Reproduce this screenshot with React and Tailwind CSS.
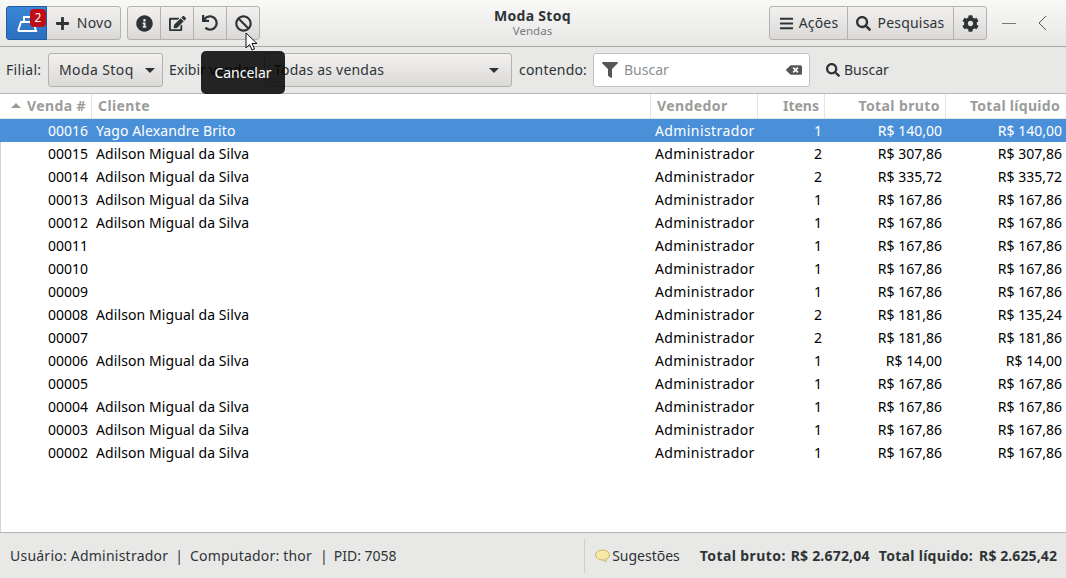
import React from 'react';
import { FaPlus, FaInfoCircle, FaEdit, FaUndo, FaBan, FaBars, FaSearch, FaCog, FaFilter, FaBackspace } from 'react-icons/fa';

const rows = [
  ['00016', 'Yago Alexandre Brito', '1', 'R$ 140,00', 'R$ 140,00'],
  ['00015', 'Adilson Migual da Silva', '2', 'R$ 307,86', 'R$ 307,86'],
  ['00014', 'Adilson Migual da Silva', '2', 'R$ 335,72', 'R$ 335,72'],
  ['00013', 'Adilson Migual da Silva', '1', 'R$ 167,86', 'R$ 167,86'],
  ['00012', 'Adilson Migual da Silva', '1', 'R$ 167,86', 'R$ 167,86'],
  ['00011', '', '1', 'R$ 167,86', 'R$ 167,86'],
  ['00010', '', '1', 'R$ 167,86', 'R$ 167,86'],
  ['00009', '', '1', 'R$ 167,86', 'R$ 167,86'],
  ['00008', 'Adilson Migual da Silva', '2', 'R$ 181,86', 'R$ 135,24'],
  ['00007', '', '2', 'R$ 181,86', 'R$ 181,86'],
  ['00006', 'Adilson Migual da Silva', '1', 'R$ 14,00', 'R$ 14,00'],
  ['00005', '', '1', 'R$ 167,86', 'R$ 167,86'],
  ['00004', 'Adilson Migual da Silva', '1', 'R$ 167,86', 'R$ 167,86'],
  ['00003', 'Adilson Migual da Silva', '1', 'R$ 167,86', 'R$ 167,86'],
  ['00002', 'Adilson Migual da Silva', '1', 'R$ 167,86', 'R$ 167,86'],
];
const cols = 'grid grid-cols-[92px_559px_107px_67px_121px_120px]';
const face = 'h-[34px] flex items-center bg-gradient-to-b from-[#f2f1f0] to-[#dbd9d7] border border-[#b4b2ae] text-[#2e3436]';
const btn = `${face} justify-center`;

export default function App() {
  return (
    <div className="relative w-[1066px] h-[578px] overflow-hidden bg-white text-[14px] text-[#2e3436] flex flex-col" style={{ fontFamily: '"Noto Sans", sans-serif' }}>
      <div className="h-[47px] shrink-0 flex items-center pl-[6px] border-b border-[#a8a6a2] bg-gradient-to-b from-[#f8f8f7] to-[#e8e7e6]">
        <div className="flex">
          <div className="relative w-[41px] h-[34px] rounded-l-[3px] border border-[#1c5da5] bg-gradient-to-b from-[#3d87d6] to-[#2a6fc0]">
            <svg width="22" height="20" viewBox="0 0 22 20" className="absolute left-[9px] top-[7px]" fill="none" stroke="#fff" strokeWidth="2">
              <path d="M2 17 L5 8 H14 M8 8 V3 H14 M2 17 H20 L18.5 12" />
            </svg>
            <span className="absolute right-[0px] top-[2px] w-[16px] h-[18px] rounded-[4px] bg-[#c00d17] text-white text-[12px] leading-[18px] text-center">2</span>
          </div>
          <div className={`${btn} w-[75px] -ml-px rounded-r-[3px] gap-[7px]`}><FaPlus size={15} /><span className="tracking-[0.3px] -mt-[2px]">Novo</span></div>
        </div>
        <div className="flex ml-[6px]">
          <div className={`${btn} w-[34px] rounded-l-[3px]`}><FaInfoCircle size={17} /></div>
          <div className={`${btn} w-[34px] -ml-px`}><FaEdit size={17} /></div>
          <div className={`${btn} w-[34px] -ml-px`}><FaUndo size={16} /></div>
          <div className={`${btn} w-[34px] -ml-px rounded-r-[3px]`}><FaBan size={17} /></div>
        </div>
        <div className="flex-1 flex flex-col items-center leading-[15px] pl-[36px]">
          <span className="font-bold text-[14px] tracking-[0.3px]">Moda Stoq</span>
          <span className="text-[11.5px] text-[#777a7b]">Vendas</span>
        </div>
        <div className="flex">
          <div className={`${btn} w-[79px] rounded-l-[3px] gap-[5px]`}><FaBars size={15} /><span className="tracking-[0.2px] -mt-[2px]">Ações</span></div>
          <div className={`${btn} w-[107px] -ml-px gap-[6px]`}><FaSearch size={15} /><span className="tracking-[0.2px] -mt-[2px]">Pesquisas</span></div>
          <div className={`${btn} w-[34px] -ml-px rounded-r-[3px]`}><FaCog size={17} /></div>
        </div>
        <div className="w-[79px] shrink-0 flex items-center text-[#5d5f5f]">
          <span className="ml-[15px] w-[14px] h-px bg-[#777]" />
          <svg width="10" height="16" viewBox="0 0 10 16" fill="none" stroke="#555" strokeWidth="1" className="ml-[21px]"><path d="M9 1 L2 8 L9 15" /></svg>
        </div>
      </div>

      <div className="h-[47px] shrink-0 flex items-center pl-[6px] bg-[#e8e8e7] border-b border-[#b6b4b0]">
        <span className="w-[36px] tracking-[0.3px] -mt-[2px]">Filial:</span>
        <div className={`${face} w-[115px] ml-[6px] rounded-[3px] pl-[10px] pr-[7px]`}>
          <span className="flex-1 tracking-[0.4px] -mt-[2px]">Moda Stoq</span><span className="w-0 h-0 border-x-[5px] border-x-transparent border-t-[5px] border-t-[#2e3436]" />
        </div>
        <span className="ml-[6px] w-[95px] -mt-[2px]">Exibir vendas</span>
        <div className={`${face} w-[248px] rounded-[3px] pl-[9px] pr-[12px]`}>
          <span className="flex-1 tracking-[0.2px] -mt-[2px]">Todas as vendas</span><span className="w-0 h-0 border-x-[5px] border-x-transparent border-t-[5px] border-t-[#2e3436]" />
        </div>
        <span className="ml-[7px] w-[68px] tracking-[0.2px] -mt-[2px]">contendo:</span>
        <div className="w-[217px] h-[34px] ml-[6px] rounded-[3px] border border-[#c4c2bf] bg-white flex items-center pl-[8px] pr-[7px] gap-[6px]">
          <FaFilter size={16} className="text-[#555753]" /><span className="flex-1 text-[#8c8f90] -mt-[2px]">Buscar</span><FaBackspace size={16} className="text-[#555753]" />
        </div>
        <FaSearch size={14} className="ml-[16px]" /><span className="ml-[4px] -mt-[2px]">Buscar</span>
      </div>

      <div className={`${cols} h-[25px] shrink-0 border-b border-[#e4e4e3] font-bold text-[#9b9c9a] items-center tracking-[0.4px]`}>
        <div className="h-full flex items-center justify-end pr-[5px] pb-[2px] border-r border-[#e4e4e3] relative"><span className="absolute left-[11px] top-[9px] w-0 h-0 border-x-[5px] border-x-transparent border-b-[5px] border-b-[#9b9c9a]" />Venda #</div>
        <div className="h-full flex items-center pl-[6px] pb-[2px] border-r border-[#e4e4e3]">Cliente</div>
        <div className="h-full flex items-center pl-[6px] pb-[2px] border-r border-[#e4e4e3]">Vendedor</div>
        <div className="h-full flex items-center justify-end pr-[5px] pb-[2px] border-r border-[#e4e4e3] tracking-normal">Itens</div>
        <div className="h-full flex items-center justify-end pr-[5px] pb-[2px] border-r border-[#e4e4e3]">Total bruto</div>
        <div className="h-full flex items-center justify-end pr-[6px] pb-[2px] tracking-[0.3px]">Total líquido</div>
      </div>
      <div className="flex-1 bg-white border-l border-[#d5d4d2]">
        {rows.map((r, i) => (
          <div key={r[0]} className={`${cols} -ml-px h-[23px] leading-[23px] ${i === 0 ? 'bg-[#4a90d9] text-white' : 'text-black'}`}>
            <div className="text-right pr-[4px]">{r[0]}</div>
            <div className="pl-[4px] tracking-[0.1px]">{r[1]}</div>
            <div className="pl-[4px] tracking-[0.4px]">Administrador</div>
            <div className="text-right pr-[3px]">{r[2]}</div>
            <div className="text-right pr-[4px]">{r[3]}</div>
            <div className="text-right pr-[4px]">{r[4]}</div>
          </div>
        ))}
      </div>

      <div className="h-[46px] shrink-0 flex items-center bg-[#e8e8e7] border-t border-[#b6b4b0] pl-[10px]">
        <span className="tracking-[0.23px]">Usuário: Administrador</span><span className="ml-[7px] mr-[7px]">|</span><span className="tracking-[0.2px]">Computador: thor</span><span className="ml-[8px] mr-[6px]">|</span><span>PID: 7058</span>
        <div className="flex-1" />
        <div className="w-px h-[34px] bg-[#cfcecc] mr-[10px]" />
        <svg width="15" height="14" viewBox="0 0 15 14" className="mr-[2px]"><ellipse cx="7.5" cy="6" rx="7" ry="5" fill="#f6e9a6" stroke="#c9b36a" /><path d="M8 10.5 L11 13 L11 9.5" fill="#f6e9a6" stroke="#c9b36a" /></svg>
        <span>Sugestões</span>
        <b className="ml-[20px] tracking-[0.4px]">Total bruto:</b><b className="ml-[5px] tracking-[0.2px]">R$ 2.672,04</b>
        <b className="ml-[9px] tracking-[0.3px]">Total líquido:</b><b className="ml-[6px] mr-[9px] tracking-[0.1px]">R$ 2.625,42</b>
      </div>

      <div className="absolute left-[201px] top-[51px] w-[84px] h-[43px] rounded-[5px] bg-black/85 text-white flex items-center justify-center">Cancelar</div>
      <svg width="14" height="20" viewBox="0 0 14 20" className="absolute left-[245px] top-[32px]"><path d="M1 1 V16 L4.5 12.5 L7 18 L9.5 17 L7 11.5 H12 Z" fill="#fff" stroke="#111" strokeWidth="1" /></svg>
    </div>
  );
}
